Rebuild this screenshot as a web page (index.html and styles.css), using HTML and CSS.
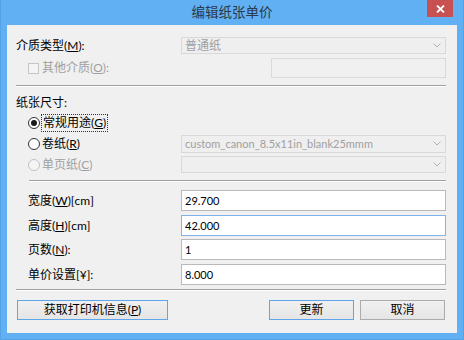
FILE: index.html
```html
<!DOCTYPE html>
<html lang="zh-CN">
<head>
    <meta charset="UTF-8">
    <title>编辑纸张单价</title>
    <link rel="stylesheet" href="styles.css">
</head>
<body>
    <div class="window">
        <div class="titlebar">
            <span class="title">编辑纸张单价</span>
            <span class="close">
                <svg width="9" height="8" viewBox="0 0 9 8"><path d="M1 0.5 L8 7.5 M8 0.5 L1 7.5" stroke="#fff" stroke-width="1.8"/></svg>
            </span>
        </div>

        <div class="client">
            <div class="row row-media">
                <span class="label">介质类型(<u>M</u>):</span>
                <div class="select disabled">
                    <span>普通纸</span>
                    <svg class="arrow" width="8" height="5" viewBox="0 0 8 5"><path d="M0.5 0.5 L4 4 L7.5 0.5" fill="none" stroke="#b0b0b0"/></svg>
                </div>
            </div>

            <div class="row row-other">
                <span class="check disabled"></span>
                <span class="label grey">其他介质(<u>O</u>):</span>
                <div class="textbox disabled"></div>
            </div>

            <div class="sep"></div>

            <div class="heading">纸张尺寸:</div>

            <div class="row radio-row">
                <span class="radio checked"></span>
                <span class="focus">常规用途(<u>G</u>)</span>
            </div>
            <div class="row radio-row">
                <span class="radio"></span>
                <span class="label">卷纸(<u>R</u>)</span>
                <div class="select disabled tall">
                    <span class="latin">custom_canon_8.5x11in_blank25mmm</span>
                    <svg class="arrow" width="8" height="5" viewBox="0 0 8 5"><path d="M0.5 0.5 L4 4 L7.5 0.5" fill="none" stroke="#b0b0b0"/></svg>
                </div>
            </div>
            <div class="row radio-row">
                <span class="radio disabled"></span>
                <span class="label grey">单页纸(<u>C</u>)</span>
                <div class="select disabled">
                    <span></span>
                    <svg class="arrow" width="8" height="5" viewBox="0 0 8 5"><path d="M0.5 0.5 L4 4 L7.5 0.5" fill="none" stroke="#b0b0b0"/></svg>
                </div>
            </div>

            <div class="sep indent"></div>

            <div class="fields">
                <div class="row field">
                    <span class="label">宽度(<u>W</u>)[cm]</span>
                    <div class="textbox latin">29.700</div>
                </div>
                <div class="row field">
                    <span class="label">高度(<u>H</u>)[cm]</span>
                    <div class="textbox latin hover">42.000</div>
                </div>
                <div class="row field">
                    <span class="label">页数(<u>N</u>):</span>
                    <div class="textbox latin">1</div>
                </div>
                <div class="row field">
                    <span class="label">单价设置[¥]:</span>
                    <div class="textbox latin">8.000</div>
                </div>
            </div>

            <div class="sep"></div>

            <div class="buttons">
                <button class="btn default wide">获取打印机信息(<u>P</u>)</button>
                <div class="spacer"></div>
                <button class="btn default">更新</button>
                <button class="btn">取消</button>
            </div>
        </div>
    </div>
</body>
</html>
```

FILE: styles.css
```css
body {
    margin: 0;
    font-family: Lato, "Noto Sans CJK SC", sans-serif;
    font-size: 12px;
    color: #000;
}
.window {
    width: 464px;
    height: 340px;
    box-sizing: border-box;
    background: #62b0f4;
    border: 1px solid #54a2e6;
    border-top: none;
    padding: 0 6px 6px 6px;
    display: flex;
    flex-direction: column;
}
.titlebar {
    position: relative;
    height: 25px;
    display: flex;
    justify-content: center;
    align-items: center;
}
.title {
    font-size: 13.5px;
    color: #2b3a48;
    line-height: 25px;
    margin-top: -1px;
}
.close {
    position: absolute;
    top: 0;
    right: 4px;
    width: 26px;
    height: 17px;
    background: #c75050;
    display: flex;
    justify-content: center;
    align-items: center;
}
.client {
    flex: 1;
    background: #f0f0f0;
    padding: 12px 11px 0 9px;
    line-height: 16px;
}
.row {
    display: flex;
    align-items: center;
}
.label {
    white-space: nowrap;
}
.latin {
    font-size: 11px;
}
.grey {
    color: #a0a0a0;
}
.row-media {
    height: 17px;
}
.row-media .label {
    width: 165px;
}
.select {
    flex: 1;
    height: 100%;
    box-sizing: border-box;
    border: 1px solid #d9d9d9;
    background: #efefef;
    display: flex;
    align-items: center;
    justify-content: space-between;
    padding: 0 4px 0 3px;
    color: #a0a0a0;
}
.row-media .select {
    flex: none;
    width: 265px;
    margin-left: auto;
}
.row-other {
    height: 20px;
    margin-top: 4px;
    padding-left: 12px;
}
.check {
    width: 9px;
    height: 9px;
    border: 1px solid #c6c6c6;
    background: #f4f4f4;
    margin-right: 3px;
}
.row-other .textbox {
    width: 175px;
    height: 100%;
    margin-left: auto;
}
.textbox {
    box-sizing: border-box;
    border: 1px solid #b9b9b9;
    background: #fff;
    padding: 0 3px;
    display: flex;
    align-items: center;
}
.textbox.disabled {
    border-color: #dadada;
    background: #f0f0f0;
}
.textbox.hover {
    border-color: #7eb4ea;
}
.sep {
    margin-top: 7px;
    border-top: 1px solid #a0a0a0;
    border-bottom: 1px solid #fff;
}
.sep.indent {
    margin-left: 13px;
    margin-top: 5px;
}
.heading {
    margin-top: 7px;
    height: 18px;
    display: flex;
    align-items: center;
}
.radio-row {
    height: 21px;
    padding-left: 12px;
}
.radio-row .select {
    flex: none;
    width: 265px;
    height: 17px;
    margin-left: auto;
}
.radio-row .select.tall {
    height: 18px;
}
.radio {
    width: 10px;
    height: 10px;
    border: 1px solid #333;
    border-radius: 50%;
    background: #fff;
    margin-right: 2px;
    display: flex;
    justify-content: center;
    align-items: center;
}
.radio.checked::after {
    content: "";
    width: 6px;
    height: 6px;
    border-radius: 50%;
    background: #1a1a1a;
}
.radio.disabled {
    border-color: #c2c2c2;
    background: #f4f4f4;
}
.focus {
    outline: 1px dotted #333;
    outline-offset: 0;
    padding: 0 1px;
    line-height: 16px;
}
.fields {
    margin-top: 8px;
}
.field {
    height: 21px;
    padding-left: 12px;
    margin-bottom: 4px;
}
.field:nth-child(2) {
    margin-bottom: 3px;
}
.field .textbox {
    width: 265px;
    height: 100%;
    margin-left: auto;
}
.fields + .sep {
    margin-top: 4px;
}
.buttons {
    margin-top: 9px;
    display: flex;
    gap: 6px;
    padding-left: 1px;
}
.spacer {
    flex: 1;
}
.btn {
    width: 85px;
    height: 20px;
    box-sizing: border-box;
    border: 1px solid #acacac;
    background: linear-gradient(#f0f0f0, #e5e5e5);
    font-family: inherit;
    font-size: 12px;
    line-height: 16px;
    padding: 0;
    color: #000;
}
.btn.default {
    border-color: #5ea6ec;
}
.btn.wide {
    width: 151px;
}
.btn:last-child {
    margin-right: 1px;
}
```
